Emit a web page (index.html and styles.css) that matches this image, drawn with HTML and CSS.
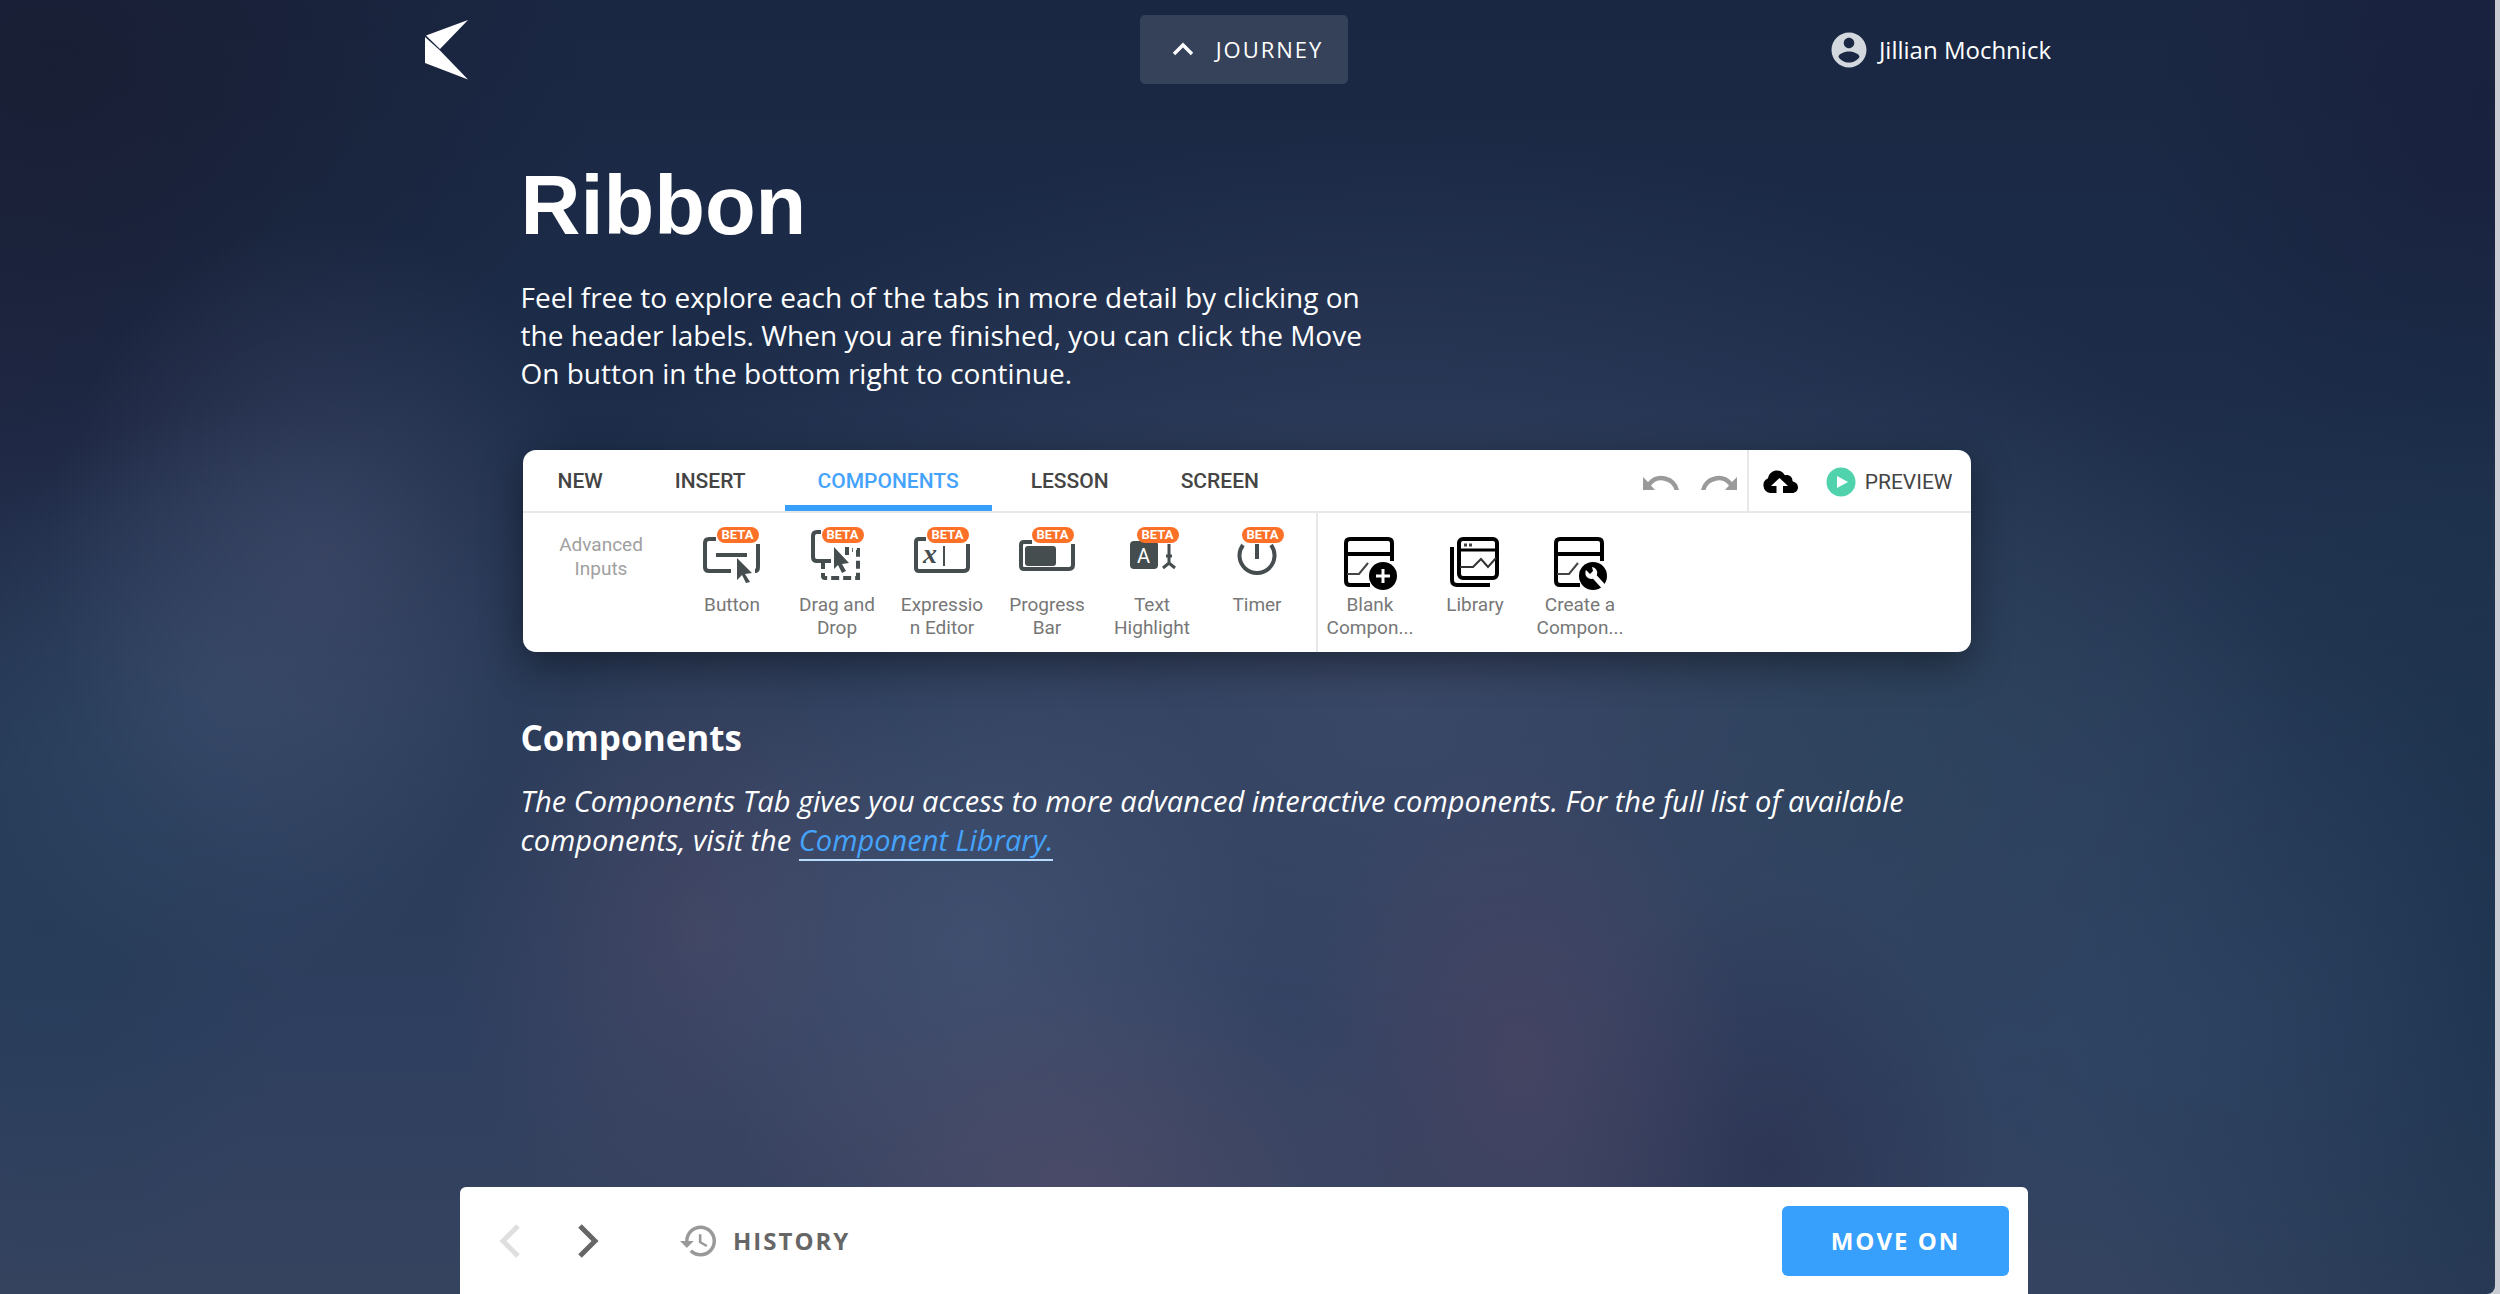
FILE: index.html
```html
<!DOCTYPE html>
<html lang="en">
<head>
<meta charset="utf-8">
<title>Ribbon</title>
<meta name="viewport" content="width=device-width, initial-scale=1">
<link rel="stylesheet" href="styles.css">
</head>
<body>
<div class="page">
  <header class="topbar">
    <a class="logo" href="#" aria-label="Home">
      <svg width="44" height="60" viewBox="0 0 44 60"><path fill="#fff" d="M43 0 1 15.500 15 29ZM0 17V43L43 59.500 14.500 30Z"/></svg>
    </a>
    <button class="journey" type="button">
      <svg width="22" height="14" viewBox="0 0 22 14"><path d="M2 12 11 3l9 9" fill="none" stroke="#fff" stroke-width="3.400"/></svg>
      JOURNEY
    </button>
    <a class="user" href="#">
      <svg width="42" height="42" viewBox="0 0 24 24"><path fill="#d3d7de" d="M12 2C6.480 2 2 6.480 2 12s4.480 10 10 10 10-4.480 10-10S17.520 2 12 2zm0 3c1.660 0 3 1.340 3 3s-1.340 3-3 3-3-1.340-3-3 1.340-3 3-3zm0 14.200c-2.500 0-4.710-1.280-6-3.220.030-1.990 4-3.080 6-3.080 1.990 0 5.970 1.090 6 3.080-1.290 1.940-3.500 3.220-6 3.220z"/></svg>
      Jillian Mochnick
    </a>
  </header>

  <main class="content">
    <h1 class="title">Ribbon</h1>
    <p class="intro">Feel free to explore each of the tabs in more detail by clicking on the header labels. When you are finished, you can click the Move On button in the bottom right to continue.</p>

    <section class="ribbon" aria-label="Ribbon">
      <div class="ribbon-head">
        <nav class="tabs">
          <button class="tab" type="button">NEW</button>
          <button class="tab" type="button">INSERT</button>
          <button class="tab tab-active" type="button">COMPONENTS</button>
          <button class="tab" type="button">LESSON</button>
          <button class="tab" type="button">SCREEN</button>
        </nav>
        <div class="history-tools">
          <button class="plain" type="button" aria-label="Undo"><svg width="36" height="18" viewBox="0 0 36 18"><path fill="#9a9a9a" d="M0 4v13h12L8 12.500A13.500 13.500 0 0 1 31.500 17H36A18 18 0 0 0 5 9Z"/></svg></button>
          <button class="plain" type="button" aria-label="Redo"><svg width="36" height="18" viewBox="0 0 36 18"><path fill="#9a9a9a" d="M36 4v13H24l4-4.500A13.500 13.500 0 0 0 4.500 17H0A18 18 0 0 1 31 9Z"/></svg></button>
        </div>
        <div class="publish-tools">
          <button class="plain" type="button" aria-label="Upload"><svg width="36" height="24" viewBox="0 0 36 24"><path d="M8 23a7.800 7.800 0 0 1-2-14.800C7 3 11 .5 15 .5c3.500 0 6.500 2 7.800 4.800 4-1.300 8 1.500 7.700 5.900C34 12 36 14.500 36 17.200 36 20.500 33.500 23 30 23h-9v-7h5l-8.500-8L9 16h5.500v7Z"/></svg></button>
          <button class="plain preview" type="button">
            <svg width="30" height="30" viewBox="0 0 30 30"><circle cx="15" cy="15" r="14.500" fill="#50d2ac"/><path fill="#fff" d="M11 9v12l11-6Z"/></svg>
            PREVIEW
          </button>
        </div>
      </div>
      <div class="ribbon-body">
        <div class="group">
          <div class="group-name">Advanced<br>Inputs</div>
          <button class="tool" type="button">
            <svg class="icon" viewBox="0 0 80 66"><g fill="none" stroke="#454d4e" stroke-width="4"><path d="M39 49H17q-4 0-4-4V21q0-4 4-4h7M66 22v23q0 4-3 4"/><path d="M24 33h31"/></g><path fill="#454d4e" d="m45 36 15 15-7 1 5 8-4 1-4-8-5 5Z"/></svg>
            <span class="beta">BETA</span><span class="tool-name">Button</span>
          </button>
          <button class="tool" type="button">
            <svg class="icon" viewBox="0 0 80 66"><path d="M34 39H20q-4 0-4-4V14q0-4 4-4h4M50 25v8" fill="none" stroke="#454d4e" stroke-width="4"/><path d="M26 39v15q0 2 2 2h33V28h-6" fill="none" stroke="#454d4e" stroke-width="4" stroke-dasharray="8 4"/><path fill="#454d4e" d="m37 25 15 16-7 1 4 7-4 2-4-8-4 4Z"/></svg>
            <span class="beta">BETA</span><span class="tool-name">Drag and<br>Drop</span>
          </button>
          <button class="tool" type="button">
            <svg class="icon" viewBox="0 0 80 66"><path d="M24 17h-7q-3 0-3 3v26q0 3 3 3h44q5 0 5-4V22" fill="none" stroke="#454d4e" stroke-width="4"/><path d="M42 24v20" stroke="#454d4e" stroke-width="2"/><text class="glyph-x" x="21" y="41">x</text></svg>
            <span class="beta">BETA</span><span class="tool-name">Expressio<br>n Editor</span>
          </button>
          <button class="tool" type="button">
            <svg class="icon" viewBox="0 0 80 66"><path d="M25 20h-8q-3 0-3 3v21q0 3 3 3h44q5 0 5-4V22" fill="none" stroke="#454d4e" stroke-width="4"/><rect x="18" y="24" width="31" height="20" rx="3" fill="#454d4e"/></svg>
            <span class="beta">BETA</span><span class="tool-name">Progress<br>Bar</span>
          </button>
          <button class="tool" type="button">
            <svg class="icon" viewBox="0 0 80 66"><rect x="18" y="19" width="28" height="28" rx="4" fill="#454d4e"/><text class="glyph-a" x="25" y="41">A</text><path d="M57 22v19M54 34h6M51 46l6-5 6 5" fill="none" stroke="#454d4e" stroke-width="3"/></svg>
            <span class="beta">BETA</span><span class="tool-name">Text<br>Highlight</span>
          </button>
          <button class="tool" type="button">
            <svg class="icon" viewBox="0 0 80 66"><path d="M26 23a17.500 17.500 0 1 0 28 0M40 22v15" fill="none" stroke="#454d4e" stroke-width="4"/></svg>
            <span class="beta">BETA</span><span class="tool-name">Timer</span>
          </button>
        </div>
        <div class="group group-library">
          <button class="tool" type="button">
            <svg class="icon" viewBox="0 0 80 66"><path d="M40 63H20q-4 0-4-4V21q0-4 4-4h38q4 0 4 4v18M16 32h46" fill="none" stroke="#000" stroke-width="4"/><path d="M17 52h12l9-11" fill="none" stroke="#444" stroke-width="2"/><circle cx="53" cy="54" r="14"/><path d="M46 54h14M53 47v14" stroke="#fff" stroke-width="3"/></svg>
            <span class="tool-name">Blank<br>Compon...</span>
          </button>
          <button class="tool" type="button">
            <svg class="icon" viewBox="0 0 80 66"><rect x="24" y="17" width="38" height="39" rx="4" fill="none" stroke="#000" stroke-width="4"/><path d="M17 25v33q0 5 5 5h33" fill="none" stroke="#000" stroke-width="4"/><path d="M24 28h38" stroke="#000" stroke-width="3"/><path d="M25 45h13l8-8 7 8 8-9" fill="none" stroke="#333" stroke-width="2"/><path d="M29 23h3M34 23h3" stroke="#444" stroke-width="3"/></svg>
            <span class="tool-name">Library</span>
          </button>
          <button class="tool" type="button">
            <svg class="icon" viewBox="0 0 80 66"><path d="M40 63H20q-4 0-4-4V21q0-4 4-4h38q4 0 4 4v18M16 32h46" fill="none" stroke="#000" stroke-width="4"/><path d="M17 52h12l9-11" fill="none" stroke="#444" stroke-width="2"/><circle cx="53" cy="54" r="14"/><path d="m53 53 11 12" stroke="#fff" stroke-width="5"/><path d="M46 48a6 6 0 1 0 6-3l1 4-3 3Z" fill="#fff"/></svg>
            <span class="tool-name">Create a<br>Compon...</span>
          </button>
        </div>
      </div>
    </section>

    <h2 class="subtitle">Components</h2>
    <p class="description">The Components Tab gives you access to more advanced interactive components. For the full list of available components, visit the <a class="link" href="#">Component Library.</a></p>
  </main>

  <footer class="controls">
    <button class="plain" type="button" aria-label="Previous" disabled><svg width="22" height="36" viewBox="0 0 22 36"><path d="M19 3 4 18l15 15" fill="none" stroke="#dfdfdf" stroke-width="5"/></svg></button>
    <button class="plain next" type="button" aria-label="Next"><svg width="22" height="36" viewBox="0 0 22 36"><path d="m3 3 15 15L3 33" fill="none" stroke="#666" stroke-width="5"/></svg></button>
    <button class="plain history" type="button">
      <svg width="36" height="32" viewBox="1 3 21 18"><path fill="#999" d="M13 3a9 9 0 0 0-9 9H1l3.890 3.890.070.140L9 12H6c0-3.870 3.130-7 7-7s7 3.130 7 7-3.130 7-7 7c-1.930 0-3.680-.790-4.940-2.060l-1.420 1.420A8.954 8.954 0 0 0 13 21a9 9 0 0 0 0-18zm-1 5v5l4.280 2.540.720-1.210-3.500-2.080V8H12z"/></svg>
      HISTORY
    </button>
    <button class="move-on" type="button">MOVE ON</button>
  </footer>
</div>
</body>
</html>
```
FILE: styles.css
```css
* {
  box-sizing: border-box;
}

body {
  margin: 0;
  font-family: "Open Sans", sans-serif;
  color: #fff;
  background: #c9ccd2;
}

button {
  font: inherit;
  color: inherit;
  border: 0;
  background: none;
  padding: 0;
}

svg {
  display: block;
  flex: none;
}

/* Soft night-sky backdrop */
.page {
  min-height: 100vh;
  margin-right: 5px;
  padding: 0 7px 0 0;
  display: flex;
  flex-direction: column;
  align-items: center;
  border-radius: 0 0 8px 0;
  background:
    radial-gradient(ellipse 11% 26% at 13% 43%, rgba(70, 76, 108, 0.55), transparent),
    radial-gradient(ellipse 12% 22% at 9% 54%, rgba(60, 82, 114, 0.5), transparent),
    radial-gradient(ellipse 10% 30% at 2% 72%, rgba(32, 60, 86, 0.5), transparent),
    radial-gradient(ellipse 9% 24% at 61% 82%, rgba(84, 68, 98, 0.5), transparent),
    radial-gradient(ellipse 14% 18% at 43% 92%, rgba(86, 78, 106, 0.6), transparent),
    radial-gradient(ellipse 12% 25% at 39% 73%, rgba(76, 90, 122, 0.55), transparent),
    radial-gradient(ellipse 10% 26% at 28% 72%, rgba(80, 76, 106, 0.55), transparent),
    radial-gradient(ellipse 9% 22% at 71% 90%, rgba(42, 46, 78, 0.6), transparent),
    radial-gradient(ellipse 18% 32% at 87% 80%, rgba(46, 70, 100, 0.65), transparent),
    radial-gradient(ellipse 16% 30% at 76% 58%, rgba(44, 70, 92, 0.45), transparent),
    radial-gradient(ellipse 36% 45% at 56% 55%, rgba(64, 76, 108, 0.75), transparent),
    radial-gradient(ellipse 18% 60% at 101% 75%, rgba(24, 46, 72, 0.85), transparent),
    radial-gradient(ellipse 22% 36% at 2% 5%, rgba(24, 28, 48, 0.8), transparent),
    radial-gradient(ellipse 12% 30% at 0% 30%, rgba(36, 38, 68, 0.5), transparent),
    radial-gradient(ellipse 14% 30% at 100% 8%, rgba(24, 30, 58, 0.7), transparent),
    linear-gradient(#1a2743, #1c2c49 30%, #273a57 55%, #2f3f5f 80%, #36435f);
}

.topbar {
  width: 100%;
  max-width: 1638px;
  height: 100px;
  padding-top: 15px;
  display: grid;
  grid-template-columns: 1fr auto 1fr;
  align-items: start;
}

.logo {
  padding-top: 5px;
  justify-self: start;
}

.journey {
  height: 69px;
  padding: 0 25px 2px 32px;
  display: flex;
  align-items: center;
  gap: 22px;
  border-radius: 5px;
  background: rgba(255, 255, 255, 0.12);
  font-size: 22px;
  font-weight: 500;
  letter-spacing: 2px;
}

.user {
  justify-self: end;
  height: 69px;
  padding-right: 12px;
  display: flex;
  align-items: center;
  gap: 9px;
  color: inherit;
  text-decoration: none;
  font-size: 24px;
}

.content {
  width: 100%;
  max-width: 1450px;
  margin-left: 3px;
  padding-top: 58px;
}

.title {
  margin: 0;
  font: bold 83px/96px "Liberation Sans", Arial, sans-serif;
}

.intro {
  max-width: 860px;
  margin: 24px 0 0;
  font-size: 28px;
  line-height: 38px;
}

.ribbon {
  margin: 58px 0 0 2px;
  border-radius: 13px;
  background: #fff;
  box-shadow: 0 12px 40px rgba(0, 0, 0, 0.4);
  font-family: Roboto, sans-serif;
  color: #444;
}

.ribbon-head {
  display: flex;
  height: 63px;
  border-bottom: 2px solid #e8e8e8;
}

.tabs {
  display: flex;
  gap: 6px;
  padding-left: 2px;
  margin-right: auto;
}

.tab {
  padding: 7px 33px 0;
  border-bottom: 6px solid transparent;
  font-size: 21px;
  font-weight: 500;
}

.tab-active {
  color: #45a3fc;
  border-color: #379ffc;
}

.history-tools,
.publish-tools {
  display: flex;
  align-items: center;
}

.history-tools {
  gap: 22px;
  padding: 2px 10px 0 0;
  border-right: 2px solid #e8e8e8;
}

.publish-tools {
  gap: 28px;
  padding: 2px 18px 0 13px;
}

.preview {
  display: flex;
  align-items: center;
  gap: 9px;
  font-size: 21px;
}

.ribbon-body {
  display: flex;
}

.group {
  display: flex;
  padding-right: 6px;
}

.group-library {
  border-left: 2px solid #e8e8e8;
}

.group-name {
  width: 157px;
  padding-top: 20px;
  font-size: 19px;
  line-height: 24px;
  text-align: center;
  color: #a0a0a0;
}

.tool {
  position: relative;
  width: 105px;
  height: 139px;
  padding: 7px 0 0;
  display: flex;
  flex-direction: column;
  align-items: center;
}

.icon {
  width: 80px;
  height: 70px;
}

.beta {
  position: absolute;
  top: 14px;
  left: 37px;
  width: 42px;
  border-radius: 8px;
  background: #fc7127;
  color: #fff;
  font-size: 13px;
  font-weight: 700;
  line-height: 16px;
  text-align: center;
}

.tool-name {
  margin-top: 3px;
  font-size: 19px;
  line-height: 23px;
  color: #777;
}

.glyph-x {
  font: italic bold 28px "Liberation Serif", serif;
  fill: #454d4e;
}

.glyph-a {
  font: 20px Roboto, sans-serif;
  fill: #fff;
}

.subtitle {
  margin: 62px 0 0;
  font-size: 35px;
  line-height: 48px;
}

.description {
  margin: 19px 0 0;
  font-size: 29px;
  line-height: 39px;
  font-style: italic;
}

.link {
  color: #45a3fc;
  text-decoration: none;
  box-shadow: 0 2px #b9dcfd;
}

.controls {
  width: 100%;
  max-width: 1568px;
  height: 107px;
  margin-top: auto;
  padding: 0 19px 0 39px;
  display: flex;
  align-items: center;
  border-radius: 6px 6px 0 0;
  background: #fff;
  color: #666;
  font-size: 24px;
  font-weight: 700;
}

.next {
  margin-left: 56px;
}

.history {
  margin-left: 81px;
  display: flex;
  align-items: center;
  gap: 17px;
  letter-spacing: 2px;
}

.move-on {
  width: 227px;
  height: 70px;
  margin-left: auto;
  border-radius: 6px;
  background: #379ffc;
  color: #fff;
  letter-spacing: 2px;
}
```
